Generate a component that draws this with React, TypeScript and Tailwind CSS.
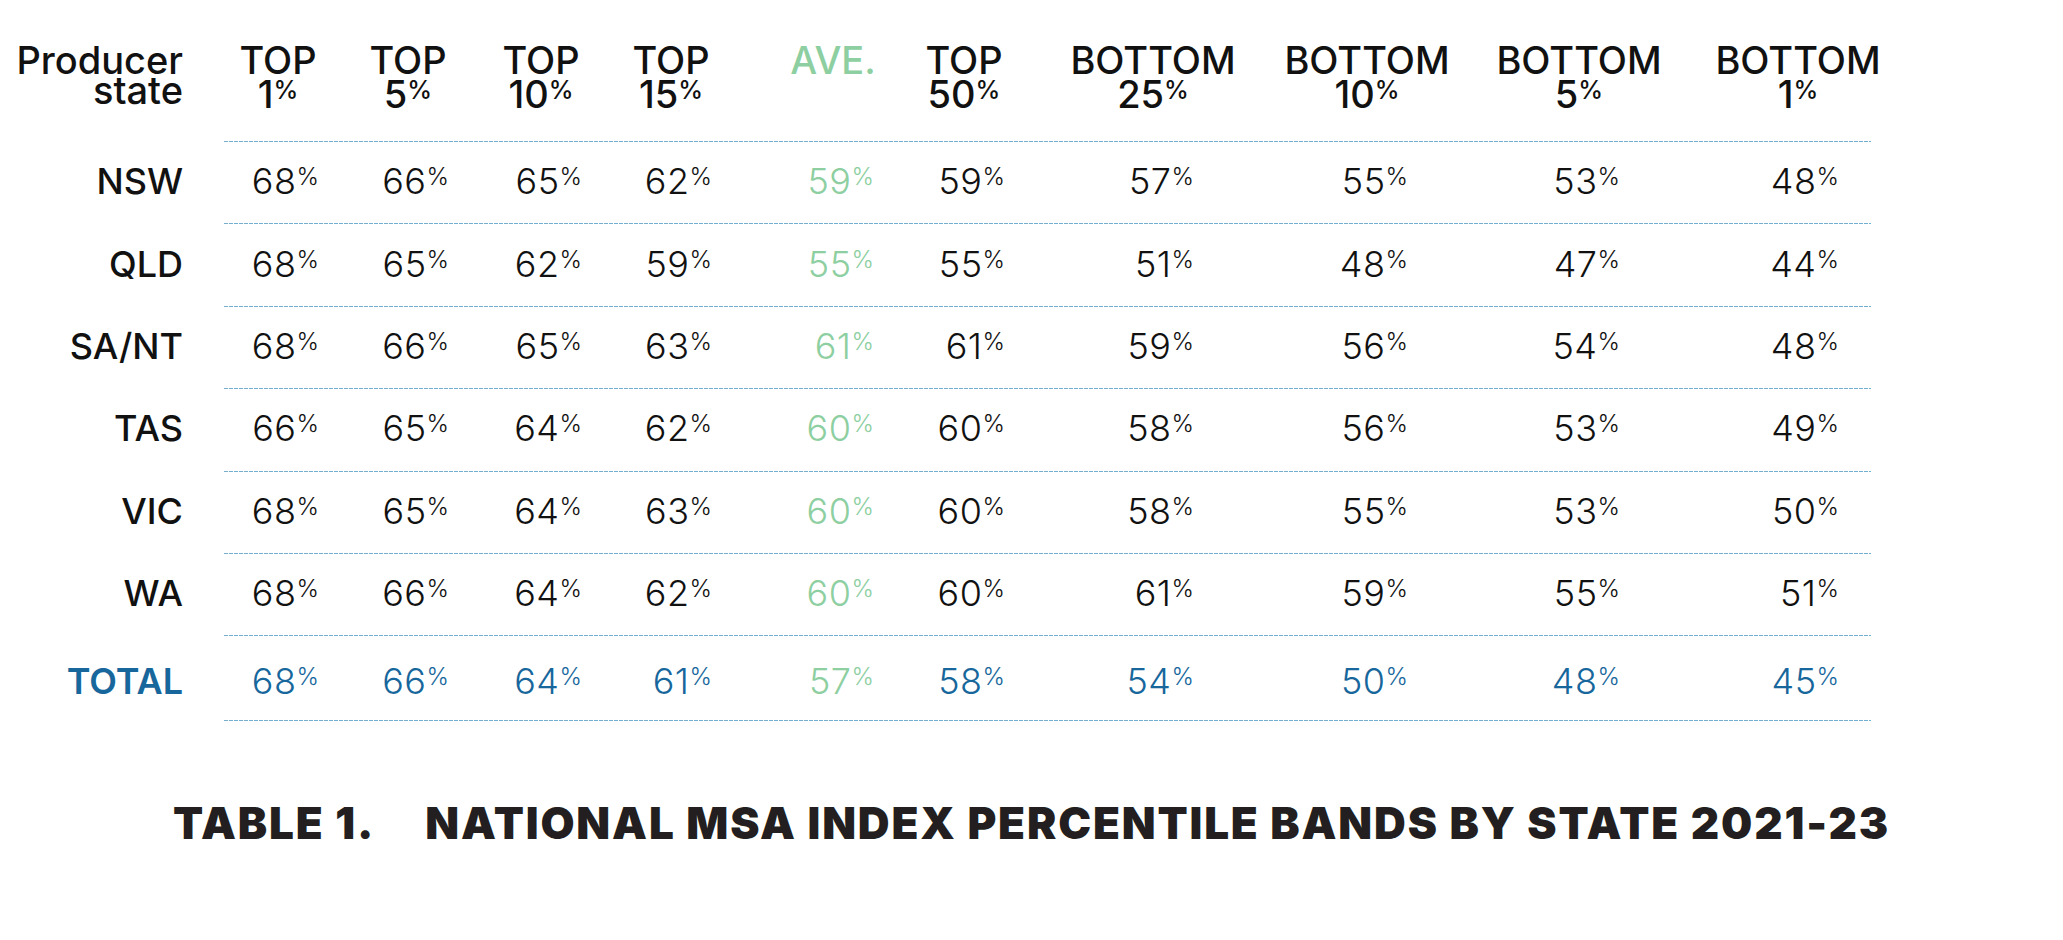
import React from 'react';

type Col = { top: string; pct?: string; green?: boolean };

const cols: Col[] = [
  { top: 'TOP', pct: '1' },
  { top: 'TOP', pct: '5' },
  { top: 'TOP', pct: '10' },
  { top: 'TOP', pct: '15' },
  { top: 'AVE.', green: true },
  { top: 'TOP', pct: '50' },
  { top: 'BOTTOM', pct: '25' },
  { top: 'BOTTOM', pct: '10' },
  { top: 'BOTTOM', pct: '5' },
  { top: 'BOTTOM', pct: '1' },
];

const rows: { state: string; values: number[] }[] = [
  { state: 'NSW', values: [68, 66, 65, 62, 59, 59, 57, 55, 53, 48] },
  { state: 'QLD', values: [68, 65, 62, 59, 55, 55, 51, 48, 47, 44] },
  { state: 'SA/NT', values: [68, 66, 65, 63, 61, 61, 59, 56, 54, 48] },
  { state: 'TAS', values: [66, 65, 64, 62, 60, 60, 58, 56, 53, 49] },
  { state: 'VIC', values: [68, 65, 64, 63, 60, 60, 58, 55, 53, 50] },
  { state: 'WA', values: [68, 66, 64, 62, 60, 60, 61, 59, 55, 51] },
];

const total = [68, 66, 64, 61, 57, 58, 54, 50, 48, 45];

// tracks are sized so every column sits centred on the header of the source table
const grid =
  'grid grid-cols-[230px_96px_164px_102px_158px_166px_96px_282px_146px_278px_160px]';

const Divider = () => (
  <div className="ml-[224px] w-[1647px] h-px bg-[repeating-linear-gradient(90deg,#74aed0_0_4px,transparent_4px_5px)]" />
);

const Value = ({ v, color }: { v: number; color: string }) => (
  <div className="flex justify-center">
    <div className={`w-[82px] shrink-0 text-right whitespace-nowrap text-[36px] tracking-[0.5px] leading-none font-light ${color}`}>
      {v}
      <span className="text-[24px] tracking-normal align-[9px]">%</span>
    </div>
  </div>
);

export default function App() {
  return (
    <div className="w-[2063px] h-[940px] bg-white pt-[45px] font-['Inter',sans-serif] text-[#111]">
      {/* header */}
      <div className={`${grid} text-[38px] leading-[30px] font-medium`}>
        <div className="pr-[47px] text-right">
          Producer
          <br />
          state
        </div>
        {cols.map((c, i) => (
          <div key={i} className="flex justify-center">
            <div className={`shrink-0 whitespace-nowrap text-center ${c.green ? 'text-[#8dcfa1]' : ''}`}>
              {c.top}
              {c.pct && (
                <>
                  <br />
                  {c.pct}
                  <span className="text-[25px] align-[9px]">%</span>
                </>
              )}
            </div>
          </div>
        ))}
      </div>

      <div className="mt-[32px]">
        <Divider />
        {rows.map((r) => (
          <React.Fragment key={r.state}>
            <div className={`${grid} h-[81.4px] items-center pb-[3px]`}>
              <div className="pr-[47px] text-right text-[36px] leading-none font-medium">{r.state}</div>
              {r.values.map((v, i) => (
                <Value key={i} v={v} color={i === 4 ? 'text-[#8dcfa1]' : 'text-[#111]'} />
              ))}
            </div>
            <Divider />
          </React.Fragment>
        ))}
        <div className={`${grid} h-[84px] items-center pt-[6px]`}>
          <div className="pr-[47px] text-right text-[36px] leading-none font-semibold text-[#17679c]">TOTAL</div>
          {total.map((v, i) => (
            <Value key={i} v={v} color={i === 4 ? 'text-[#8dcfa1]' : 'text-[#17679c]'} />
          ))}
        </div>
        <Divider />
      </div>

      <div className="mt-[80px] text-center text-[44px] tracking-[1.85px] leading-none font-black text-[#231f20] whitespace-nowrap">
        <span className="mr-[50px]">TABLE 1.</span>
        <span>NATIONAL MSA INDEX PERCENTILE BANDS BY STATE 2021-23</span>
      </div>
    </div>
  );
}
